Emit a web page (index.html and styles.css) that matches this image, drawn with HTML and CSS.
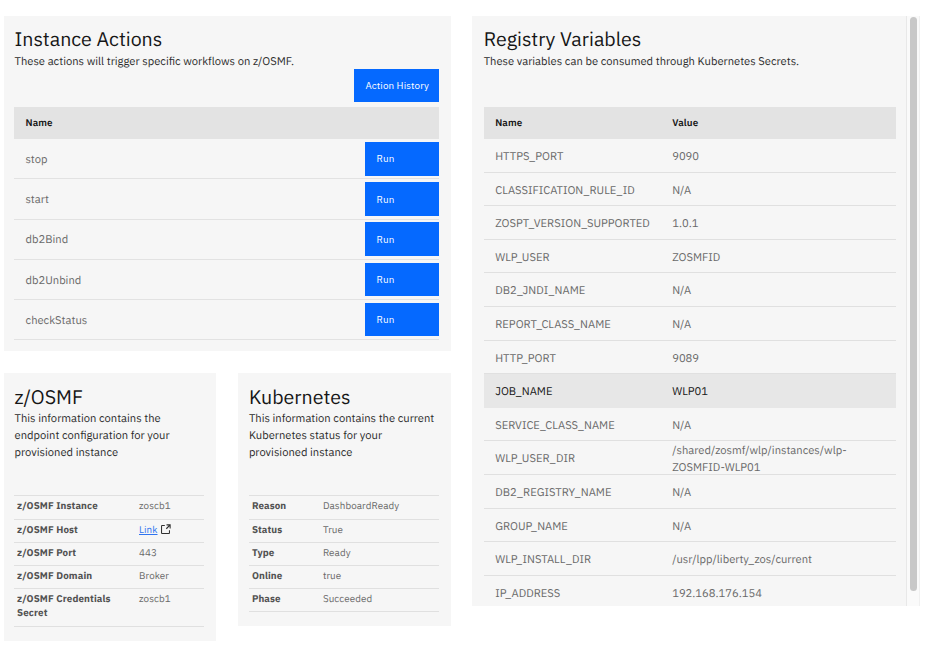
FILE: index.html
```html
<!DOCTYPE html>
<html lang="en">
<head>
<meta charset="utf-8">
<title>Instance dashboard</title>
<link rel="stylesheet" href="styles.css">
</head>
<body>
<main class="dashboard">
  <div class="left">
    <section class="card actions">
      <h2>Instance Actions</h2>
      <p>These actions will trigger specific workflows on z/OSMF.</p>
      <div class="toolbar"><button class="btn history">Action History</button></div>
      <div class="thead"><span>Name</span></div>
      <div class="action"><span>stop</span><button class="btn run">Run</button></div>
      <div class="action"><span>start</span><button class="btn run">Run</button></div>
      <div class="action"><span>db2Bind</span><button class="btn run">Run</button></div>
      <div class="action"><span>db2Unbind</span><button class="btn run">Run</button></div>
      <div class="action"><span>checkStatus</span><button class="btn run">Run</button></div>
    </section>
    <div class="pair">
      <section class="card info zosmf">
        <h2>z/OSMF</h2>
        <p>This information contains the endpoint configuration for your provisioned instance</p>
        <dl>
          <div><dt>z/OSMF Instance</dt><dd>zoscb1</dd></div>
          <div class="host"><dt>z/OSMF Host</dt><dd><a href="#">Link</a><svg class="launch" viewBox="0 0 32 32"><path d="M26 29H6a3 3 0 0 1-3-3V6a3 3 0 0 1 3-3h8v3H6v20h20v-8h3v8a3 3 0 0 1-3 3Z"/><path d="M19 1v3h6.500l-8.500 8.500 2.500 2.500L28 6.500V13h3V1Z"/></svg></dd></div>
          <div><dt>z/OSMF Port</dt><dd>443</dd></div>
          <div><dt>z/OSMF Domain</dt><dd>Broker</dd></div>
          <div class="secret"><dt>z/OSMF Credentials Secret</dt><dd>zoscb1</dd></div>
        </dl>
      </section>
      <section class="card info kube">
        <h2>Kubernetes</h2>
        <p>This information contains the current Kubernetes status for your provisioned instance</p>
        <dl>
          <div><dt>Reason</dt><dd>DashboardReady</dd></div>
          <div><dt>Status</dt><dd>True</dd></div>
          <div><dt>Type</dt><dd>Ready</dd></div>
          <div><dt>Online</dt><dd>true</dd></div>
          <div><dt>Phase</dt><dd>Succeeded</dd></div>
        </dl>
      </section>
    </div>
  </div>
  <div class="scroller">
    <section class="card registry">
      <h2>Registry Variables</h2>
      <p>These variables can be consumed through Kubernetes Secrets.</p>
      <div class="thead"><span>Name</span><span>Value</span></div>
      <div class="var"><span>HTTPS_PORT</span><span>9090</span></div>
      <div class="var"><span>CLASSIFICATION_RULE_ID</span><span>N/A</span></div>
      <div class="var"><span>ZOSPT_VERSION_SUPPORTED</span><span>1.0.1</span></div>
      <div class="var"><span>WLP_USER</span><span>ZOSMFID</span></div>
      <div class="var"><span>DB2_JNDI_NAME</span><span>N/A</span></div>
      <div class="var"><span>REPORT_CLASS_NAME</span><span>N/A</span></div>
      <div class="var"><span>HTTP_PORT</span><span>9089</span></div>
      <div class="var active"><span>JOB_NAME</span><span>WLP01</span></div>
      <div class="var"><span>SERVICE_CLASS_NAME</span><span>N/A</span></div>
      <div class="var"><span>WLP_USER_DIR</span><span>/shared/zosmf/wlp/instances/wlp-<br>ZOSMFID-WLP01</span></div>
      <div class="var"><span>DB2_REGISTRY_NAME</span><span>N/A</span></div>
      <div class="var"><span>GROUP_NAME</span><span>N/A</span></div>
      <div class="var"><span>WLP_INSTALL_DIR</span><span>/usr/lpp/liberty_zos/current</span></div>
      <div class="var"><span>IP_ADDRESS</span><span>192.168.176.154</span></div>
    </section>
    <div class="track"><div class="thumb"></div></div>
  </div>
</main>
</body>
</html>
```
FILE: styles.css
```css
* { box-sizing: border-box; }
body {
  margin: 0;
  background: #fff;
  color: #161616;
  font-family: "IBM Plex Sans", Roboto, "Liberation Sans", sans-serif;
  font-size: 11.2px;
  line-height: 16.6px;
  text-rendering: geometricPrecision;
}
.dashboard { display: flex; align-items: flex-start; gap: 21.500px; padding: 16px 0 0 3.5px; }
.left { width: 447.200px; flex: none; }
.card { background: #f6f6f6; padding: 10.800px 11.300px 0 10.5px; }
h2 { margin: 0; font-size: 19.6px; line-height: 25.2px; font-weight: 400; padding-left: 0.5px; }
p { margin: 0; padding: 1.800px 0 0 0.5px; color: #2b2b2b; }
.actions { height: 334.700px; }
.toolbar { display: flex; justify-content: flex-end; height: 37.300px; margin-top: -1.100px; }
.btn {
  border: 0;
  margin: 0;
  background: #0569ff;
  color: #fff;
  font: 400 9.800px/16px "IBM Plex Sans", Roboto, "Liberation Sans", sans-serif;
  letter-spacing: 0.11px;
  text-align: left;
  padding: 1px 0 0 11.500px;
}
.history { width: 85.500px; height: 33px; }
.run { width: 74px; height: 33.600px; padding-left: 11.200px; }
.thead { display: flex; align-items: center; height: 32.400px; background: #e3e3e3; font-size: 9.800px; font-weight: 600; letter-spacing: 0.13px; padding: 1px 0 0 11.500px; }
.action { display: flex; align-items: center; justify-content: space-between; height: 40.150px; border-bottom: 1px solid #e2e2e2; padding-left: 11.500px; color: #696969; }
.action:nth-of-type(3) { height: 40.500px; }
.action span { padding-top: 3px; }
.pair { display: flex; align-items: flex-start; justify-content: space-between; margin-top: 22.300px; }
.info { width: 212.500px; padding-top: 12.200px; }
.info p { height: 85px; padding-top: 1px; }
.zosmf { height: 267.600px; padding-right: 11.800px; }
.kube { height: 252.800px; padding-left: 11.200px; }
.kube h2, .kube p { padding-left: 0; margin-left: -0.500px; }
.kube p { margin-right: -3px; }
dl { margin: 0; border-top: 1px solid #e0e0e0; font-size: 9.800px; line-height: 14px; letter-spacing: 0.11px; color: #696969; }
dl div { display: flex; height: 23.200px; padding: 3px 0 0 3px; border-bottom: 1px solid #e0e0e0; }
dt { font-weight: 700; color: #525252; width: 122px; padding-right: 15px; }
.kube dl { letter-spacing: 0.09px; }
.kube dl div { padding-left: 2.500px; }
.kube dt { width: 71px; }
dd { margin: 0; }
.host dd { display: flex; }
.secret { height: 38px; }
a { color: #2f74f0; text-decoration: underline; }
.launch { width: 11px; height: 11px; margin: 1px 0 0 2.500px; fill: #303030; }
.scroller { display: flex; width: 447.500px; height: 590.300px; overflow: hidden; }
.registry { width: 434px; height: 100%; padding-left: 11.500px; padding-right: 10.500px; overflow: hidden; }
.registry h2, .registry p { padding-left: 0; }
.registry p { height: 54.700px; }
.thead span:first-child:not(:last-child), .var span:first-child { width: 177px; flex: none; }
.var { display: flex; align-items: center; height: 33.600px; border-bottom: 1px solid #e0e0e0; padding: 3.800px 0 0 11.500px; color: #696969; }
.active { background: #e7e7e7; color: #161616; border-color: #e7e7e7; }
.track { width: 13.500px; background: #fafafa; border-left: 1px solid #e8e8e8; border-right: 1px solid #f0f0f0; padding: 0.5px 0 0 3px; }
.thumb { width: 7px; height: 574.500px; border-radius: 4px; background: #c8c8c8; }
```
